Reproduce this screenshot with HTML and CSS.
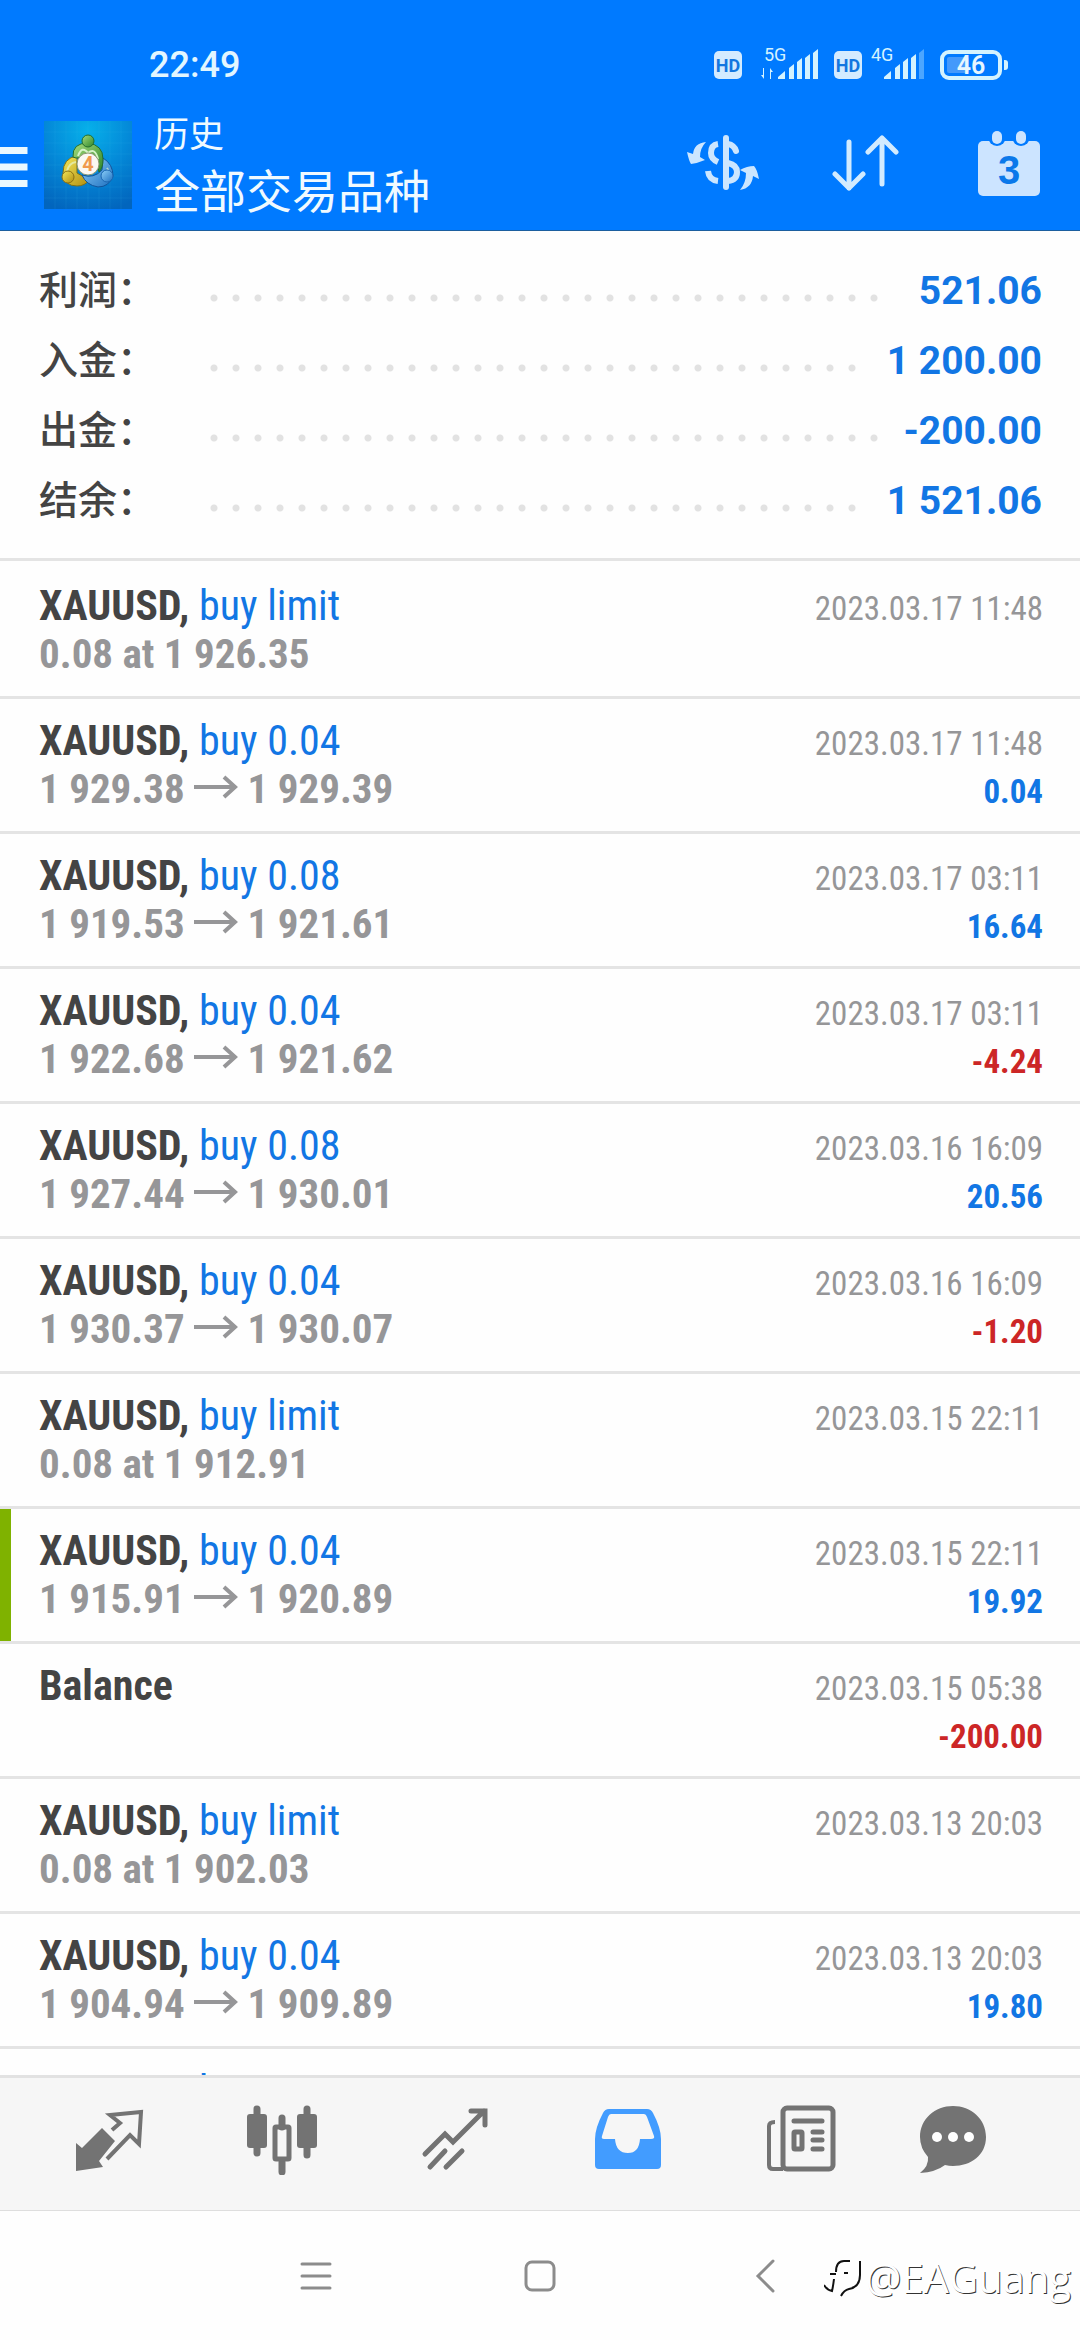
FILE: index.html
```html
<!DOCTYPE html>
<html lang="zh-CN">
  <head>
    <meta charset="UTF-8" />
    <meta name="viewport" content="width=device-width, initial-scale=1" />
    <title>历史</title>
    <link rel="stylesheet" href="styles.css">
  </head>
  <body>

    <!-- arrow used between open and close price -->
    <svg class="defs" width="0" height="0" aria-hidden="true">
      <symbol id="arrow" viewBox="0 0 44 24">
        <path d="M0 12H41M30 2L41 12L30 22" fill="none" stroke="currentColor" stroke-width="4"/>
      </symbol>
    </svg>

    <header class="header">
      <div class="status-bar">
        <span class="clock">22:49</span>
        <div class="status-icons">
          <svg width="28" height="30" viewBox="0 0 28 30">
            <rect y="1" width="28" height="28" rx="5" fill="#d4ebff"/>
            <text x="14" y="22" text-anchor="middle" font-size="18" font-weight="700" fill="#1377e0">HD</text>
          </svg>
          <svg class="signal" width="56" height="34" viewBox="0 0 56 34">
            <text x="2" y="13" font-size="18" fill="#d4f3ff">5G</text>
            <g fill="#d4f3ff">
              <path d="M2 20v11l-3-4h2v-7zM8 31V20l3 4h-2v7z"/>
              <path d="M16 31v-2l7-6v8zM27 31V20l5-4v15zM35 31V14l5-4v21zM43 31V10l5-4v25zM51 31V5l5-4v30z"/>
            </g>
          </svg>
          <svg width="28" height="30" viewBox="0 0 28 30">
            <rect y="1" width="28" height="28" rx="5" fill="#d4ebff"/>
            <text x="14" y="22" text-anchor="middle" font-size="18" font-weight="700" fill="#1377e0">HD</text>
          </svg>
          <svg class="signal second" width="52" height="34" viewBox="0 0 52 34">
            <text x="-1" y="13" font-size="18" fill="#d4f3ff">4G</text>
            <path fill="#d4f3ff" d="M12 31v-2l7-6v8zM23 31V20l5-4v15zM31 31V14l5-4v21zM39 31V10l5-4v25z"/>
            <path fill="#4ca6ff" d="M47 31V5l5-4v30z"/>
          </svg>
          <svg width="68" height="30" viewBox="0 0 68 30">
            <rect x="2" y="2" width="58" height="26" rx="7" fill="none" stroke="#d4f3ff" stroke-width="4"/>
            <rect x="7" y="7" width="22" height="16" rx="2" fill="#4499fb"/>
            <path d="M64 10h1q3 0 3 3v4q0 3-3 3h-1z" fill="#d4f3ff"/>
            <text x="31" y="24" text-anchor="middle" font-size="25" font-weight="600" fill="#e6f6ff">46</text>
          </svg>
        </div>
      </div>

      <div class="app-bar">
        <button class="menu-btn" aria-label="菜单">
          <svg width="28" height="42" viewBox="0 0 28 42">
            <path d="M0 4.500H27.500M0 21H27.500M0 37.500H27.500" stroke="#eaf8ff" stroke-width="7"/>
          </svg>
        </button>
        <svg class="logo" width="88" height="88" viewBox="0 0 88 88">
          <defs>
            <radialGradient id="logoBg" cx="50%" cy="10%" r="95%">
              <stop offset="0" stop-color="#06b0ea"/>
              <stop offset="0.500" stop-color="#0489d8"/>
              <stop offset="1" stop-color="#0265bd"/>
            </radialGradient>
            <linearGradient id="green" x1="0" y1="0" x2="1" y2="1">
              <stop offset="0" stop-color="#a5dc7c"/>
              <stop offset="1" stop-color="#2d862b"/>
            </linearGradient>
            <linearGradient id="yellow" x1="0" y1="0" x2="1" y2="1">
              <stop offset="0" stop-color="#f4e85a"/>
              <stop offset="1" stop-color="#b18d10"/>
            </linearGradient>
            <linearGradient id="blue" x1="0" y1="0" x2="1" y2="1">
              <stop offset="0" stop-color="#8fd2fa"/>
              <stop offset="1" stop-color="#1d6fc0"/>
            </linearGradient>
          </defs>
          <rect width="88" height="88" fill="url(#logoBg)"/>
          <path d="M11 0V88M22 0V88M33 0V88M44 0V88M55 0V88M66 0V88M77 0V88M0 11H88M0 22H88M0 33H88M0 44H88M0 55H88M0 66H88M0 77H88" stroke="#3fb4f0" stroke-opacity="0.120"/>
          <path d="M33 35Q19 37 19 52Q20 65 33 65Q41 65 45 59L33 52z" fill="url(#yellow)" stroke="#7d7118"/>
          <path d="M59 37Q69 43 69 55Q65 66 54 66Q42 64 38 54Q50 58 58 49z" fill="url(#blue)" stroke="#12549b"/>
          <path d="M29 36Q28 22 44 22Q59 24 59 38Q59 47 55 51L52 36L32 37z" fill="url(#green)" stroke="#236e2d"/>
          <path d="M34 35Q38 24 44 32Q51 26 54 38" fill="none" stroke="#d5f3c8" stroke-width="2"/>
          <path d="M23 50Q25 42 32 41M63 47Q67 52 63 60" fill="none" stroke="#e5f5c8" stroke-opacity="0.700" stroke-width="2"/>
          <circle cx="44" cy="20" r="6" fill="url(#green)" stroke="#236e2d"/>
          <circle cx="24" cy="56" r="6" fill="url(#yellow)" stroke="#8a7015"/>
          <circle cx="63" cy="55" r="6" fill="url(#blue)" stroke="#1a66b2"/>
          <circle cx="44" cy="43" r="11" fill="#fbf8f3" stroke="#8d9872"/>
          <text x="44" y="50" text-anchor="middle" font-size="20" font-weight="700" fill="#f09a4e">4</text>
        </svg>
        <div class="titles">
          <h2>历史</h2>
          <h1>全部交易品种</h1>
        </div>
        <div class="actions">
          <button aria-label="交易品种">
            <svg width="72" height="56" viewBox="0 0 72 56">
              <g fill="none" stroke="#cce6ff" stroke-width="6">
                <path d="M39 3V52" stroke-linecap="round"/>
                <path d="M31 9Q24 10 24 18Q24 24 31 27M21 36Q22 45 31 46"/>
                <path d="M41 9Q47 10 49 16" stroke-linecap="round"/>
                <path d="M41 28Q50 30 50 37Q50 45 41 46"/>
              </g>
              <path d="M19 7Q7 8 6 19L0 17Q2 26 4 29Q11 28 18 25L13 22Q13 13 19 7zM53 55Q65 53 66 41L72 44Q70 34 67 31Q60 31 53 35L59 38Q59 48 53 55z" fill="#cce6ff"/>
            </svg>
          </button>
          <button aria-label="排序">
            <svg width="68" height="58" viewBox="0 0 68 58">
              <path d="M17 8V54M3 40L17 54L31 40M50 50V4M36 18L50 4L64 18" fill="none" stroke="#d2ebff" stroke-width="5" stroke-linecap="round" stroke-linejoin="round"/>
            </svg>
          </button>
          <button aria-label="日期">
            <svg width="64" height="66" viewBox="0 0 64 66">
              <rect x="1" y="11" width="62" height="55" rx="5" fill="#cce4ff"/>
              <rect x="11" y="-4" width="18" height="20" rx="9" fill="#007aff"/>
              <rect x="35" y="-4" width="18" height="20" rx="9" fill="#007aff"/>
              <rect x="15" y="1" width="10" height="13" rx="5" fill="#cce4ff"/>
              <rect x="39" y="1" width="10" height="13" rx="5" fill="#cce4ff"/>
              <text x="32" y="54" text-anchor="middle" font-size="40" font-weight="700" fill="#0a78ea">3</text>
            </svg>
          </button>
        </div>
      </div>
    </header>

    <dl class="summary">
      <div class="summary-row"><dt>利润：</dt><dd>521.06</dd></div>
      <div class="summary-row"><dt>入金：</dt><dd>1 200.00</dd></div>
      <div class="summary-row"><dt>出金：</dt><dd>-200.00</dd></div>
      <div class="summary-row"><dt>结余：</dt><dd>1 521.06</dd></div>
    </dl>

    <ul class="history">
      <li class="deal">
        <div class="info">
          <p class="symbol">XAUUSD, <span>buy limit</span></p>
          <p class="price">0.08 at 1 926.35</p>
        </div>
        <div class="result"><time>2023.03.17 11:48</time></div>
      </li>
      <li class="deal">
        <div class="info">
          <p class="symbol">XAUUSD, <span>buy 0.04</span></p>
          <p class="price">1 929.38 <svg><use href="#arrow"/></svg> 1 929.39</p>
        </div>
        <div class="result"><time>2023.03.17 11:48</time><p class="profit">0.04</p></div>
      </li>
      <li class="deal">
        <div class="info">
          <p class="symbol">XAUUSD, <span>buy 0.08</span></p>
          <p class="price">1 919.53 <svg><use href="#arrow"/></svg> 1 921.61</p>
        </div>
        <div class="result"><time>2023.03.17 03:11</time><p class="profit">16.64</p></div>
      </li>
      <li class="deal">
        <div class="info">
          <p class="symbol">XAUUSD, <span>buy 0.04</span></p>
          <p class="price">1 922.68 <svg><use href="#arrow"/></svg> 1 921.62</p>
        </div>
        <div class="result"><time>2023.03.17 03:11</time><p class="profit loss">-4.24</p></div>
      </li>
      <li class="deal">
        <div class="info">
          <p class="symbol">XAUUSD, <span>buy 0.08</span></p>
          <p class="price">1 927.44 <svg><use href="#arrow"/></svg> 1 930.01</p>
        </div>
        <div class="result"><time>2023.03.16 16:09</time><p class="profit">20.56</p></div>
      </li>
      <li class="deal">
        <div class="info">
          <p class="symbol">XAUUSD, <span>buy 0.04</span></p>
          <p class="price">1 930.37 <svg><use href="#arrow"/></svg> 1 930.07</p>
        </div>
        <div class="result"><time>2023.03.16 16:09</time><p class="profit loss">-1.20</p></div>
      </li>
      <li class="deal">
        <div class="info">
          <p class="symbol">XAUUSD, <span>buy limit</span></p>
          <p class="price">0.08 at 1 912.91</p>
        </div>
        <div class="result"><time>2023.03.15 22:11</time></div>
      </li>
      <li class="deal take-profit">
        <div class="info">
          <p class="symbol">XAUUSD, <span>buy 0.04</span></p>
          <p class="price">1 915.91 <svg><use href="#arrow"/></svg> 1 920.89</p>
        </div>
        <div class="result"><time>2023.03.15 22:11</time><p class="profit">19.92</p></div>
      </li>
      <li class="deal">
        <div class="info">
          <p class="symbol">Balance</p>
        </div>
        <div class="result"><time>2023.03.15 05:38</time><p class="profit loss">-200.00</p></div>
      </li>
      <li class="deal">
        <div class="info">
          <p class="symbol">XAUUSD, <span>buy limit</span></p>
          <p class="price">0.08 at 1 902.03</p>
        </div>
        <div class="result"><time>2023.03.13 20:03</time></div>
      </li>
      <li class="deal">
        <div class="info">
          <p class="symbol">XAUUSD, <span>buy 0.04</span></p>
          <p class="price">1 904.94 <svg><use href="#arrow"/></svg> 1 909.89</p>
        </div>
        <div class="result"><time>2023.03.13 20:03</time><p class="profit">19.80</p></div>
      </li>
      <li class="deal">
        <div class="info">
          <p class="symbol">XAUUSD, <span>buy 0.08</span></p>
        </div>
      </li>
    </ul>

    <nav class="tabs">
      <button aria-label="行情">
        <svg width="70" height="70" viewBox="0 0 70 70">
          <path d="M2 38L8 43L28 23L41 36L25 56L29 62L2 66z" fill="currentColor"/>
          <path d="M38 25L46 18L36 10L67 7L65 39L56 30L33 54" fill="none" stroke="currentColor" stroke-width="4"/>
        </svg>
      </button>
      <button aria-label="图表">
        <svg width="70" height="70" viewBox="0 0 70 70">
          <path d="M10 4V48M60 4V50M35 13V22M35 57V67" stroke="currentColor" stroke-width="7" stroke-linecap="round"/>
          <rect x="0" y="9" width="20" height="34" rx="3" fill="currentColor"/>
          <rect x="50" y="9" width="20" height="34" rx="3" fill="currentColor"/>
          <rect x="28" y="22" width="14" height="32" rx="1" fill="none" stroke="currentColor" stroke-width="5"/>
        </svg>
      </button>
      <button aria-label="交易">
        <svg width="70" height="70" viewBox="0 0 70 70">
          <path d="M5 49L25 29L33 37L64 6M51 6H65V20M10 62L25 46M26 62L42 46" fill="none" stroke="currentColor" stroke-width="5" stroke-linecap="round"/>
        </svg>
      </button>
      <button class="active" aria-label="历史">
        <svg width="70" height="70" viewBox="0 0 70 70">
          <path fill-rule="evenodd" fill="currentColor" d="M16 4H54Q58 4 60 8Q68 23 68 34V60Q68 64 64 64H6Q2 64 2 60V34Q2 23 10 8Q12 4 16 4zM18 9Q16 9 15 12L9 31Q8 34 11 34H22Q23 48 35 48Q46 48 47 34H58Q62 34 61 31L54 12Q53 9 51 9z"/>
        </svg>
      </button>
      <button aria-label="新闻">
        <svg width="70" height="70" viewBox="0 0 70 70">
          <g fill="none" stroke="currentColor" stroke-width="5">
            <rect x="17" y="3" width="50" height="61" rx="4"/>
            <path d="M17 64H7Q3 64 3 60V21Q3 17 9 17" stroke-width="4"/>
            <path d="M28 16H56M47 27H56M47 35H56M47 44H56" stroke-linecap="round"/>
            <rect x="28" y="27" width="8" height="17" rx="1"/>
          </g>
        </svg>
      </button>
      <button aria-label="消息">
        <svg width="70" height="70" viewBox="0 0 70 70">
          <path d="M35 1C53 1 68 14 68 32C68 50 53 61 35 61Q31 61 27 60Q18 67 2 68Q11 61 10 52Q2 43 2 32C2 14 17 1 35 1z" fill="currentColor"/>
          <circle cx="19" cy="32" r="5" fill="#fff"/>
          <circle cx="35" cy="32" r="5" fill="#fff"/>
          <circle cx="51" cy="32" r="5" fill="#fff"/>
        </svg>
      </button>
    </nav>

    <footer class="system-nav">
      <button aria-label="最近任务">
        <svg width="34" height="34" viewBox="0 0 34 34">
          <path d="M3 5H31M3 17H31M3 29H31" stroke="#8c8c8c" stroke-width="3" stroke-linecap="round"/>
        </svg>
      </button>
      <button aria-label="主屏幕">
        <svg width="34" height="34" viewBox="0 0 34 34">
          <rect x="3" y="3" width="28" height="28" rx="6" fill="none" stroke="#8c8c8c" stroke-width="3"/>
        </svg>
      </button>
      <button aria-label="返回">
        <svg width="34" height="34" viewBox="0 0 34 34">
          <path d="M26 2L11 17L26 32" fill="none" stroke="#8c8c8c" stroke-width="3" stroke-linecap="round"/>
        </svg>
      </button>
      <div class="watermark">
        <svg width="38" height="38" viewBox="0 0 38 38">
          <path d="M26 2H20Q12 2 12 13M6 15H12M10 20Q9 28 8 32Q3 31 0 26M36 2V16Q36 28 25 30Q20 31 17 37M20 14H24" fill="none" stroke="#111" stroke-width="2"/>
        </svg>
        <span>@EAGuang</span>
      </div>
    </footer>

  </body>
</html>
```
FILE: styles.css
```css
* {
  box-sizing: border-box;
}

body {
  margin: 0;
  height: 100vh;
  display: flex;
  flex-direction: column;
  overflow: hidden;
  background: #fefefe;
  color: #444;
  font-family: Roboto, "Noto Sans CJK SC", sans-serif;
}

h1, h2, p, dl, dd, ul {
  margin: 0;
  padding: 0;
}

button {
  padding: 0;
  border: none;
  background: none;
  color: inherit;
  cursor: pointer;
  display: flex;
  align-items: center;
  justify-content: center;
}

svg {
  display: block;
  flex: none;
}

.defs {
  position: absolute;
}

/* header */
.header {
  flex: none;
  background: #007aff;
  border-bottom: 1px solid #1c5f9f;
  color: #f0faff;
}

.status-bar {
  height: 96px;
  padding: 33px 72px 0 149px;
  display: flex;
  align-items: center;
  justify-content: space-between;
}

.clock {
  font-size: 36px;
  font-weight: 500;
  color: #e2f6ff;
}

.status-icons {
  display: flex;
  align-items: center;
  gap: 16px;
}

.signal {
  margin-left: 4px;
  overflow: visible;
}

.signal.second {
  margin-left: -6px;
}

.app-bar {
  height: 134px;
  display: flex;
  align-items: center;
}

.menu-btn {
  width: 28px;
  height: 88px;
  margin-right: 16px;
}

.menu-btn svg {
  margin-top: 8px;
}

.logo {
  margin-top: 4px;
}

.titles {
  margin-left: 22px;
  padding-top: 7px;
}

h2 {
  font-size: 35px;
  line-height: 50px;
  font-weight: 400;
}

h1 {
  font-size: 46px;
  line-height: 62px;
  font-weight: 400;
}

.actions {
  margin-left: auto;
  display: flex;
}

.actions button {
  width: 143px;
  height: 88px;
}

/* totals */
.summary {
  flex: none;
  padding: 25px 38px 22px 39px;
  border-bottom: 3px solid #e4e4e4;
}

.summary-row {
  display: flex;
  line-height: 70px;
  font-size: 39px;
}

.summary-row dt {
  width: 157px;
  font-weight: 500;
}

/* dotted leader, the first layer hides the last dot when it is cut */
.summary-row::after {
  content: "";
  order: 1;
  flex: 1;
  background:
    linear-gradient(#fefefe, #fefefe) right / mod(100%, 22px) 100% no-repeat,
    radial-gradient(circle at 18px 42px, #e2e2e2 3px, transparent 4px) 0 0 / 22px 70px;
}

.summary-row dd {
  order: 2;
  margin-left: 22px;
  font-weight: 700;
  color: #1276e4;
}

/* deals */
.history {
  flex: 1;
  min-height: 0;
  overflow: hidden;
  padding-top: 3px;
  list-style: none;
  font-family: "Roboto Condensed", Roboto, sans-serif;
}

.deal {
  height: 135px;
  padding: 18px 37px 0 39px;
  border-bottom: 3px solid #e4e4e4;
  display: flex;
  justify-content: space-between;
  line-height: 48px;
}

.take-profit {
  position: relative;
}

.take-profit::before {
  content: "";
  position: absolute;
  left: 0;
  top: 0;
  bottom: 0;
  width: 11px;
  background: #7fb200;
}

.symbol {
  font-size: 42px;
  font-weight: 700;
}

.symbol span {
  font-weight: 400;
  color: #1276e4;
}

.price {
  font-size: 41px;
  font-weight: 700;
  color: #969698;
}

.price svg {
  display: inline-block;
  width: 44px;
  height: 24px;
  vertical-align: 4px;
}

.result {
  padding-top: 3px;
  text-align: right;
  font-size: 33px;
}

.result time {
  display: block;
  color: #969698;
}

.profit {
  font-weight: 700;
  color: #1276e4;
}

.profit.loss {
  color: #cc2626;
}

/* bottom bars */
.tabs {
  flex: none;
  height: 136px;
  padding: 0 61px 8px 22px;
  display: grid;
  grid-template-columns: repeat(5, 1fr) 132px;
  background: #f6f6f6;
  border-top: 3px solid #e2e2e2;
  border-bottom: 1px solid #dedede;
  color: #737373;
}

.tabs .active {
  color: #429cff;
}

.system-nav {
  position: relative;
  flex: none;
  height: 129px;
  display: flex;
  align-items: center;
  justify-content: center;
  gap: 190px;
}

.watermark {
  position: absolute;
  right: 9px;
  bottom: 34px;
  display: flex;
  align-items: center;
  gap: 4px;
  color: #fff;
  font-family: "Open Sans", sans-serif;
  font-size: 40px;
  line-height: 56px;
  text-shadow: 1px 1px 0 #333;
}
```
